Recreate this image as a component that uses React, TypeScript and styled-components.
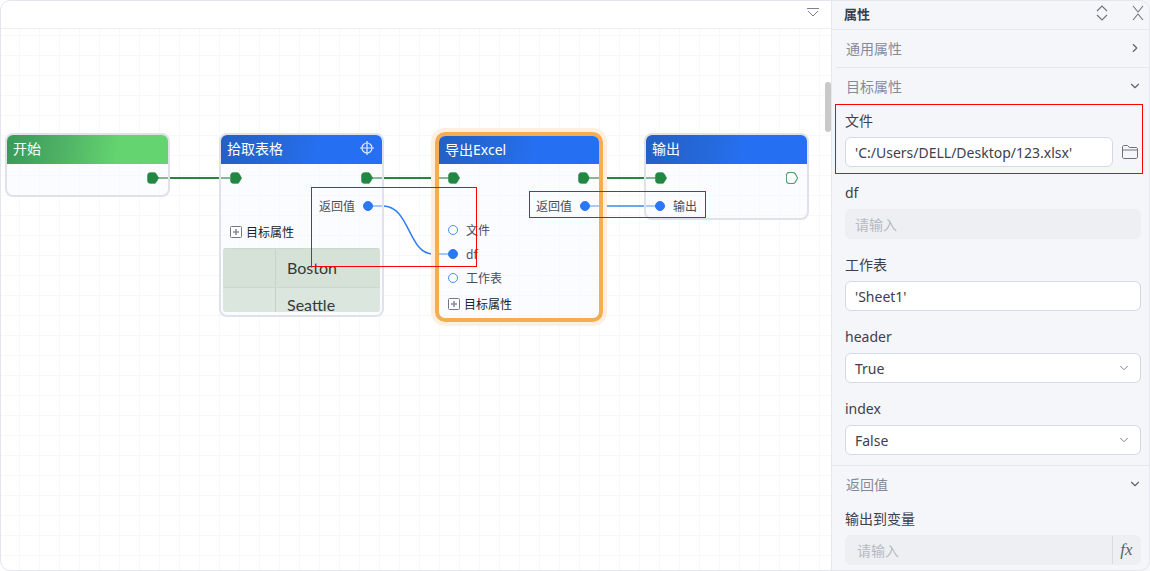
import { ReactNode } from 'react';
import { styled, createGlobalStyle } from 'styled-components';
import { ChevronDown, ChevronRight } from 'lucide-react';

const GlobalStyle = createGlobalStyle`
  html, body {
    margin: 0;
    padding: 0;
    background: #fff;
  }

  * {
    box-sizing: border-box;
  }
`;

const FlowHandle = ({ hollow }: { hollow?: boolean }) => (
  <HandleSvg viewBox="0 0 12 12">
    <path
      d="M3.500.4H6.800C7.700.4 8.500.8 9.100 1.600L11.700 6 9.100 10.400C8.500 11.200 7.700 11.600 6.800 11.600H3.500C1.700 11.600.4 10.200.4 8.500V3.500C.4 1.800 1.700.4 3.500.4z"
      fill={hollow ? '#fff' : '#238744'}
      stroke={hollow ? '#4e9c6c' : '#238744'}
      strokeWidth={hollow ? 1.1 : 0.4}
    />
  </HandleSvg>
);

const AttrRow = () => (
  <AttrLine>
    <svg width="12" height="12" viewBox="0 0 12 12">
      <rect x=".5" y=".5" width="11" height="11" rx="1" fill="#fff" stroke="#74768a" />
      <path d="M3 6h6M6 3v6" stroke="#8a8c9c" strokeWidth="1.6" />
    </svg>
    目标属性
  </AttrLine>
);

const NodeCard = ({
  x,
  y,
  title,
  kind,
  active,
  icon,
  children,
}: {
  x: number;
  y: number;
  title: string;
  kind: 'green' | 'blue';
  active?: boolean;
  icon?: ReactNode;
  children: ReactNode;
}) => (
  <Node $x={x} $y={y} $active={active}>
    <NodeHead $kind={kind} $active={active}>
      {title}
      {icon}
    </NodeHead>
    {children}
  </Node>
);

const Field = ({ label, children }: { label: string; children: ReactNode }) => (
  <FieldBox>
    <FieldLabel>{label}</FieldLabel>
    {children}
  </FieldBox>
);

const SelectField = ({ label, value }: { label: string; value: string }) => (
  <Field label={label}>
    <InputBox>
      {value}
      <ChevronDown size={14} color="#6d7180" strokeWidth={1.5} />
    </InputBox>
  </Field>
);

const App = () => (
  <Frame>
    <GlobalStyle />
    <Canvas>
      <CanvasBar>
        <svg width="12" height="9" viewBox="0 0 12 9">
          <path d="M0 .5h12M1 3l5 5 5-5" fill="none" stroke="#7d8290" strokeWidth="1" />
        </svg>
      </CanvasBar>

      <Wires viewBox="0 0 831 571">
        <path d="M158 178H230M372 178H454M590 178H660" stroke="#238744" strokeWidth="2" fill="none" />
        <path d="M373 206H383C410 206 408 254 433 254H448" stroke="#2f7ef5" strokeWidth="1.5" fill="none" />
        <path d="M585 206H660" stroke="#2f7ef5" strokeWidth="2" fill="none" opacity=".7" />
      </Wires>

      <NodeCard x={5} y={133} title="开始" kind="green">
        <FlowRow $single="end">
          <FlowHandle />
        </FlowRow>
        <Spacer />
      </NodeCard>

      <NodeCard
        x={219}
        y={133}
        title="拾取表格"
        kind="blue"
        icon={
          <svg width="14" height="14" viewBox="0 0 14 14">
            <circle cx="7" cy="7" r="5" fill="none" stroke="#e3ecff" strokeWidth="1.2" />
            <path d="M7 0v14M0 7h14" stroke="#e3ecff" strokeWidth="1.2" />
          </svg>
        }
      >
        <FlowRow>
          <FlowHandle />
          <FlowHandle />
        </FlowRow>
        <DataRow $end>
          返回值
          <Port $filled />
        </DataRow>
        <AttrRow />
        <TablePreview>
          <TableRow $shade="#d6e2d8" $height={39}>
            <TableCell />
            <TableCell>Boston</TableCell>
          </TableRow>
          <TableRow $shade="#dbe6df" $height={34}>
            <TableCell />
            <TableCell>Seattle</TableCell>
          </TableRow>
        </TablePreview>
      </NodeCard>

      <NodeCard x={435} y={132} title="导出Excel" kind="blue" active>
        <FlowRow>
          <FlowHandle />
          <FlowHandle />
        </FlowRow>
        <DataRow $end>
          返回值
          <Port $filled />
        </DataRow>
        <DataRow>
          <Port />
          文件
        </DataRow>
        <DataRow>
          <Port $filled />
          df
        </DataRow>
        <DataRow>
          <Port />
          工作表
        </DataRow>
        <AttrRow />
      </NodeCard>

      <NodeCard x={644} y={133} title="输出" kind="blue">
        <FlowRow>
          <FlowHandle />
          <FlowHandle hollow />
        </FlowRow>
        <DataRow>
          <Port $filled />
          输出
        </DataRow>
      </NodeCard>

      <RedBox $x={311} $y={187} $w={166} $h={80} />
      <RedBox $x={529} $y={191} $w={177} $h={27} />
      <ScrollThumb />
    </Canvas>

    <Panel>
      <PanelHead>
        属性
        <PanelTools>
          <svg width="12" height="16" viewBox="0 0 12 16">
            <path d="M1 6l5-5 5 5M1 10l5 5 5-5" fill="none" stroke="#6d7180" strokeWidth="1.1" />
          </svg>
          <svg width="12" height="16" viewBox="0 0 12 16">
            <path d="M1 1l5 6 5-6M1 15l5-6 5 6" fill="none" stroke="#6d7180" strokeWidth="1.1" />
          </svg>
        </PanelTools>
      </PanelHead>

      <SectionHead>
        通用属性
        <ChevronRight size={14} color="#5f6472" strokeWidth={2} />
      </SectionHead>

      <SectionHead $open>
        目标属性
        <ChevronDown size={14} color="#5f6472" strokeWidth={2} />
      </SectionHead>
      <SectionBody>
        <HighlightedField>
          <Field label="文件">
            <FileRow>
              <InputBox>'C:/Users/DELL/Desktop/123.xlsx'</InputBox>
              <svg width="18" height="16" viewBox="0 0 18 16">
                <path
                  d="M1.500 13V3c0-.8.600-1.500 1.500-1.500h3.600l1.800 2h6.600c.9 0 1.500.7 1.500 1.500v8c0 .8-.6 1.500-1.500 1.500H3c-.9 0-1.500-.7-1.500-1.500zM1.500 6h15"
                  fill="none"
                  stroke="#6d7180"
                  strokeWidth="1"
                />
              </svg>
            </FileRow>
          </Field>
        </HighlightedField>
        <Field label="df">
          <InputBox $disabled>请输入</InputBox>
        </Field>
        <Field label="工作表">
          <InputBox>'Sheet1'</InputBox>
        </Field>
        <SelectField label="header" value="True" />
        <SelectField label="index" value="False" />
      </SectionBody>

      <SectionHead $open $divided>
        返回值
        <ChevronDown size={14} color="#5f6472" strokeWidth={2} />
      </SectionHead>
      <ReturnBody>
        <Field label="输出到变量">
          <InputBox $disabled $tight>
            请输入
            <FxButton>fx</FxButton>
          </InputBox>
        </Field>
      </ReturnBody>
    </Panel>
  </Frame>
);

export default App;

const Frame = styled.div`
  position: relative;
  display: flex;
  width: 1150px;
  height: 571px;
  overflow: hidden;

  font-family: 'Noto Sans', 'Noto Sans CJK SC', sans-serif;
  color: #3d404c;

  &::after {
    content: '';
    position: absolute;
    inset: 0;
    border: 1px solid #e4e6ee;
    border-radius: 10px;
    pointer-events: none;
    z-index: 5;
  }
`;

const Canvas = styled.div`
  position: relative;
  flex: 0 0 831px;
  height: 100%;

  background-color: #fff;
  background-image: linear-gradient(to right, #f7f8fa 1px, transparent 1px),
    linear-gradient(to bottom, #f7f8fa 1px, transparent 1px);
  background-size: 20px 20px;
  background-position: 19px 15px;
`;

const CanvasBar = styled.div`
  display: flex;
  align-items: center;
  justify-content: flex-end;
  height: 29px;
  padding: 0 12px 4px 0;

  background: #fff;
  border-bottom: 1px solid #eceef2;
`;

const Wires = styled.svg`
  position: absolute;
  left: 0;
  top: 0;
  width: 831px;
  height: 571px;
`;

const Node = styled.div<{ $x: number; $y: number; $active?: boolean }>`
  position: absolute;
  left: ${(props) => props.$x}px;
  top: ${(props) => props.$y}px;
  width: ${(props) => (props.$active ? 168 : 165)}px;

  background: rgba(247, 249, 255, 0.45);
  border: ${(props) => (props.$active ? '4px solid #f4ae4f' : '2px solid #e0e1ea')};
  border-radius: ${(props) => (props.$active ? 10 : 8)}px;
  box-shadow: ${(props) => (props.$active ? '0 0 0 4px #fdf0e0' : 'none')};
`;

const NodeHead = styled.div<{ $kind: 'green' | 'blue'; $active?: boolean }>`
  display: flex;
  align-items: center;
  justify-content: space-between;
  height: ${(props) => (props.$active ? 28 : 29)}px;
  padding: 0 8px 3px 6px;

  background: ${(props) =>
    props.$kind === 'green'
      ? 'linear-gradient(100deg, #379a58 0%, #4fb265 35%, #63d46f 68%, #63d46f 100%)'
      : 'linear-gradient(100deg, #2360c4 0%, #2569dc 40%, #2570f2 60%, #2570f2 100%)'};
  border-radius: 6px 6px 0 0;
  color: #fff;
  font-size: 14px;
`;

const FlowRow = styled.div<{ $single?: 'end' }>`
  display: flex;
  align-items: center;
  justify-content: ${(props) => (props.$single ? 'flex-end' : 'space-between')};
  height: 28px;
  margin-bottom: 2px;
  padding: 0 9px;
`;

const Spacer = styled.div`
  height: 1px;
`;

const HandleSvg = styled.svg`
  display: block;
  width: 12px;
  height: 12px;
`;

const DataRow = styled.div<{ $end?: boolean }>`
  display: flex;
  align-items: center;
  justify-content: ${(props) => (props.$end ? 'flex-end' : 'flex-start')};
  gap: 8px;
  height: 24px;
  padding: 0 9px;

  color: #4a4d58;
  font-size: 12px;
`;

const Port = styled.span<{ $filled?: boolean }>`
  flex: none;
  width: 10px;
  height: 10px;

  background: ${(props) => (props.$filled ? '#2a78f6' : '#fff')};
  border: 1.5px solid ${(props) => (props.$filled ? '#2a78f6' : '#4d8cf0')};
  border-radius: 50%;
`;

const AttrLine = styled.div`
  display: flex;
  align-items: center;
  gap: 4px;
  height: 28px;
  padding: 0 9px;

  color: #20222a;
  font-size: 12px;
`;

const TablePreview = styled.div`
  height: 64px;
  margin: 2px 2px 3px;
  overflow: hidden;

  border-radius: 3px;
`;

const TableRow = styled.div<{ $shade: string; $height: number }>`
  display: flex;
  height: ${(props) => props.$height}px;

  background: ${(props) => props.$shade};
  border-top: 1px solid #cbd8cd;
`;

const TableCell = styled.div`
  display: flex;
  align-items: center;
  padding-left: 11px;

  color: #333a36;
  font-family: Lato, sans-serif;
  font-size: 16px;
  line-height: 16px;

  &:first-child {
    flex: 0 0 53px;
    border-right: 1px solid #c6d3c8;
    padding: 0;
  }
`;

const RedBox = styled.div<{ $x: number; $y: number; $w: number; $h: number }>`
  position: absolute;
  left: ${(props) => props.$x}px;
  top: ${(props) => props.$y}px;
  width: ${(props) => props.$w}px;
  height: ${(props) => props.$h}px;

  border: 1px solid #f00;
  pointer-events: none;
`;

const ScrollThumb = styled.div`
  position: absolute;
  left: 825px;
  top: 82px;
  width: 6px;
  height: 50px;

  background: #c9c9c9;
  border-radius: 3px;
`;

const Panel = styled.div`
  flex: 1;
  min-width: 0;
  height: 100%;

  background: #f5f6fa;
  border-left: 1px solid #e6e8ef;
`;

const PanelHead = styled.div`
  display: flex;
  align-items: center;
  justify-content: space-between;
  height: 30px;
  padding: 0 6px 3px 12px;

  border-bottom: 1px solid #e6e8ef;
  color: #3a3d48;
  font-size: 13px;
  font-weight: 700;
`;

const PanelTools = styled.div`
  display: flex;
  gap: 24px;
`;

const SectionHead = styled.div<{ $open?: boolean; $divided?: boolean }>`
  display: flex;
  align-items: center;
  justify-content: space-between;
  height: ${(props) => (props.$open ? 37 : 38)}px;
  margin-left: ${(props) => (props.$divided ? 0 : 4)}px;
  padding: 0 8px ${(props) => (props.$divided ? 0 : 2)}px ${(props) => (props.$divided ? 14 : 10)}px;

  border-top: ${(props) => (props.$divided ? '1px solid #e6e8ef' : 'none')};
  border-bottom: ${(props) => (props.$open ? 'none' : '1px solid #e6e8ef')};
  color: #858a99;
  font-size: 14px;
`;

const SectionBody = styled.div`
  display: flex;
  flex-direction: column;
  gap: 16px;
  padding: 6px 9px 10px 13px;
`;

const ReturnBody = styled.div`
  padding: 7px 9px 0 13px;
`;

const FieldBox = styled.div`
  display: flex;
  flex-direction: column;
  gap: 6px;
`;

const HighlightedField = styled.div`
  position: relative;

  &::before {
    content: '';
    position: absolute;
    left: -10px;
    right: -2px;
    top: -7px;
    bottom: -7px;
    border: 1px solid #f00;
    pointer-events: none;
  }
`;

const FieldLabel = styled.div`
  height: 20px;

  color: #3d404c;
  font-size: 14px;
  line-height: 20px;
`;

const FileRow = styled.div`
  display: flex;
  align-items: center;
  gap: 8px;

  > div {
    flex: 0 0 268px;
  }
`;

const InputBox = styled.div<{ $disabled?: boolean; $tight?: boolean }>`
  display: flex;
  align-items: center;
  justify-content: space-between;
  height: 30px;
  padding: ${(props) => (props.$tight ? '0 0 0 11px' : '0 9px 0 9px')};

  background: ${(props) => (props.$disabled ? '#eeeff2' : '#fff')};
  border: 1px solid ${(props) => (props.$disabled ? '#eeeff2' : '#d5d8e5')};
  border-radius: 6px;
  color: ${(props) => (props.$disabled ? '#b6b9c2' : '#3d404c')};
  font-size: 14px;
`;

const FxButton = styled.span`
  display: flex;
  align-items: center;
  justify-content: center;
  width: 28px;
  height: 28px;

  border-left: 1px solid #d9dbe3;
  color: #5d606c;
  font-family: 'Liberation Serif', serif;
  font-size: 17px;
  font-style: italic;
`;
